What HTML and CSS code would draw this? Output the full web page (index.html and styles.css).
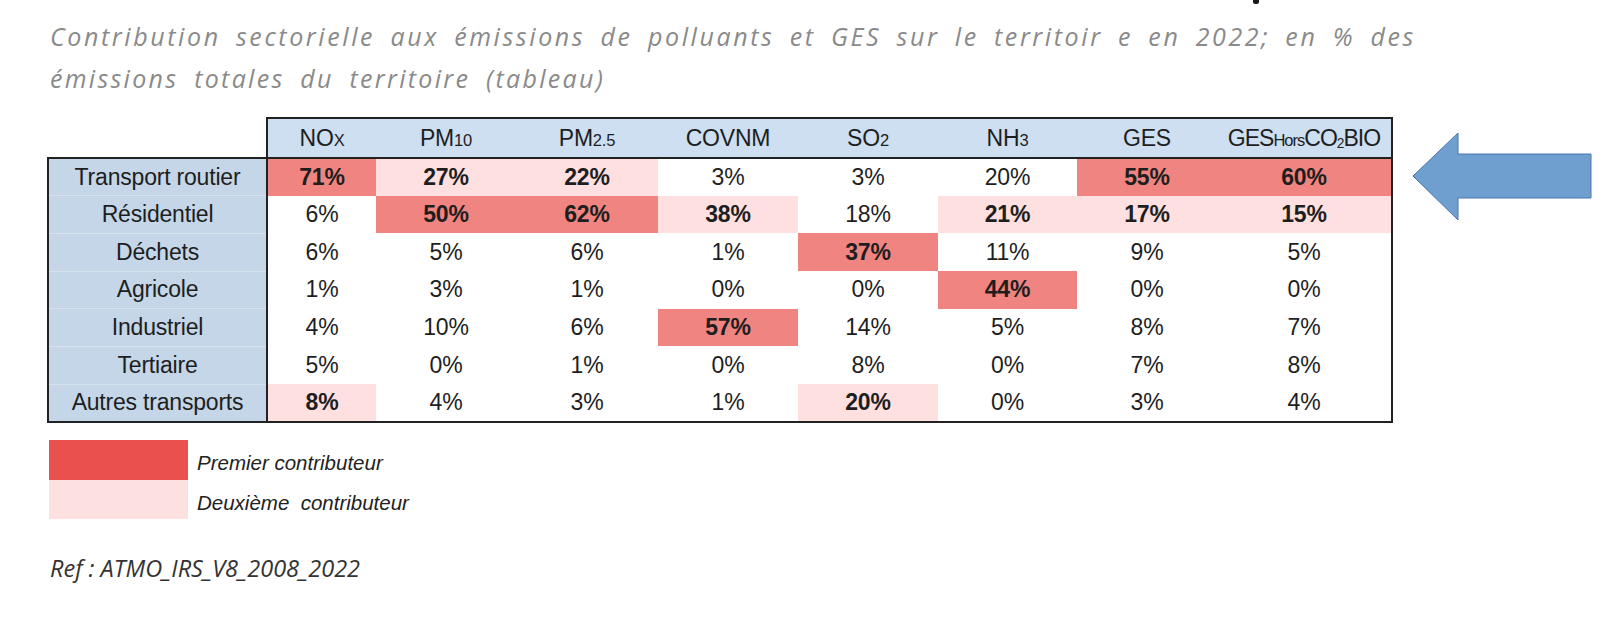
FILE: index.html
```html
<!DOCTYPE html>
<html lang="fr">
<head>
<meta charset="utf-8">
<title>Contribution sectorielle</title>
<link rel="stylesheet" href="styles.css">
</head>
<body>
<div class="page">
  <span class="mark"></span>
  <div class="title">
    <div class="line1">Contribution sectorielle aux émissions de polluants et GES sur le territoir e en 2022; en % des</div>
    <div class="line2">émissions totales du territoire (tableau)</div>
  </div>

  <div class="table-row">
    <table class="tbl">
      <colgroup>
        <col class="c-label"><col class="c-nox"><col class="c-std"><col class="c-pm25"><col class="c-std"><col class="c-std"><col class="c-nh3"><col class="c-std"><col class="c-last">
      </colgroup>
      <thead>
        <tr>
          <th class="corner"></th>
          <th>NO<span class="sm">X</span></th>
          <th>PM<span class="sm">10</span></th>
          <th>PM<span class="sm">2.5</span></th>
          <th>COVNM</th>
          <th>SO<span class="sm">2</span></th>
          <th>NH<span class="sm">3</span></th>
          <th>GES</th>
          <th class="ghc">GES<span class="sm">Hors</span>CO<sub class="sub">2</sub>BIO</th>
        </tr>
      </thead>
      <tbody>
        <tr><th>Transport routier</th><td class="p1">71%</td><td class="p2">27%</td><td class="p2">22%</td><td>3%</td><td>3%</td><td>20%</td><td class="p1">55%</td><td class="p1">60%</td></tr>
        <tr><th>Résidentiel</th><td>6%</td><td class="p1">50%</td><td class="p1">62%</td><td class="p2">38%</td><td>18%</td><td class="p2">21%</td><td class="p2">17%</td><td class="p2">15%</td></tr>
        <tr><th>Déchets</th><td>6%</td><td>5%</td><td>6%</td><td>1%</td><td class="p1">37%</td><td>11%</td><td>9%</td><td>5%</td></tr>
        <tr><th>Agricole</th><td>1%</td><td>3%</td><td>1%</td><td>0%</td><td>0%</td><td class="p1">44%</td><td>0%</td><td>0%</td></tr>
        <tr><th>Industriel</th><td>4%</td><td>10%</td><td>6%</td><td class="p1">57%</td><td>14%</td><td>5%</td><td>8%</td><td>7%</td></tr>
        <tr><th>Tertiaire</th><td>5%</td><td>0%</td><td>1%</td><td>0%</td><td>8%</td><td>0%</td><td>7%</td><td>8%</td></tr>
        <tr><th>Autres transports</th><td class="p2">8%</td><td>4%</td><td>3%</td><td>1%</td><td class="p2">20%</td><td>0%</td><td>3%</td><td>4%</td></tr>
      </tbody>
    </table>
    <svg class="arrow" width="181" height="90" viewBox="0 0 181 90" aria-hidden="true">
      <polygon points="1,44 46,1 46,22 179,22 179,66 46,66 46,88" fill="#6f9fcf" stroke="#4a76ae" stroke-width="1"/>
    </svg>
  </div>

  <div class="legend">
    <div class="leg-row"><span class="sw sw1"></span><span class="leg-text">Premier contributeur</span></div>
    <div class="leg-row"><span class="sw sw2"></span><span class="leg-text">Deuxième  contributeur</span></div>
  </div>

  <p class="ref">Ref : ATMO_IRS_V8_2008_2022</p>
</div>
</body>
</html>
```
FILE: styles.css
```css
html, body {
  margin: 0;
  padding: 0;
  background: #ffffff;
}

.page {
  position: relative;
  padding-top: 15px;
}

.mark {
  position: absolute;
  left: 1253px;
  top: 0;
  width: 6px;
  height: 4px;
  background: #1a1a1a;
  border-radius: 0 0 2px 2px;
}

.title {
  margin-left: 50px;
  width: 1366px;
  font-family: "Open Sans", "DejaVu Sans", sans-serif;
  font-style: italic;
  font-weight: 400;
  font-size: 25px;
  line-height: 42px;
  letter-spacing: 2.3px;
  word-spacing: 7px;
  color: #8a8a8a;
  white-space: nowrap;
}

.line1 {
  letter-spacing: 2.6px;
  word-spacing: 4px;
  white-space: normal;
  text-align: justify;
  text-align-last: justify;
}

.table-row {
  display: flex;
  align-items: flex-start;
  margin-top: 18px;
  margin-left: 47px;
}

.tbl {
  border-collapse: collapse;
  table-layout: fixed;
  width: 1345px;
  font-family: "Liberation Sans", Arial, sans-serif;
  font-size: 23px;
  letter-spacing: -0.2px;
  color: #1e1e1e;
}

.c-label { width: 219px; }
.c-nox { width: 109px; }
.c-std { width: 140px; }
.c-pm25 { width: 142px; }
.c-nh3 { width: 139px; }
.c-last { width: 175px; }

.tbl th,
.tbl td {
  padding: 0;
  text-align: center;
  font-weight: normal;
  white-space: nowrap;
}

.tbl thead th {
  height: 38px;
  background: #cddff1;
  border-top: 2px solid #222;
  border-bottom: 2px solid #222;
}

.tbl thead th.corner {
  background: none;
  border: none;
}

.tbl thead th:nth-child(2) {
  border-left: 2px solid #222;
}

.tbl thead th:last-child,
.tbl tbody td:last-child {
  border-right: 2px solid #222;
}

.tbl tbody tr {
  height: 37.7px;
}

.tbl tbody th {
  background: #c4d6e7;
  border-left: 2px solid #222;
  border-right: 2px solid #222;
  border-bottom: 1px solid #d6e2ee;
}

.tbl tbody tr:first-child th {
  border-top: 2px solid #222;
}

.tbl tbody tr:last-child > * {
  border-bottom: 2px solid #222;
}

.sm {
  font-size: 0.72em;
}

.ghc {
  letter-spacing: -1px;
}

.sub {
  font-size: 0.6em;
  vertical-align: -2px;
}

.tbl .p1 {
  background: #f08480;
  font-weight: bold;
}

.tbl .p2 {
  background: #fde0df;
  font-weight: bold;
}

.arrow {
  display: block;
  margin-left: 19px;
  margin-top: 15px;
  flex: none;
}

.legend {
  margin-top: 17px;
  margin-left: 49px;
}

.leg-row {
  display: flex;
  height: 40px;
}

.leg-row + .leg-row {
  height: 39px;
}

.sw {
  width: 139px;
  height: 100%;
}

.sw1 { background: #e8514d; }
.sw2 { background: #fde1e1; }

.leg-text {
  margin-left: 9px;
  padding-top: 9px;
  font-family: "Liberation Sans", Arial, sans-serif;
  font-style: italic;
  font-size: 20.5px;
  line-height: 28px;
  color: #222;
  white-space: pre;
}

.ref {
  margin: 34px 0 0 50px;
  font-family: "Open Sans", "DejaVu Sans", sans-serif;
  font-style: italic;
  font-size: 23.5px;
  line-height: 30px;
  color: #333;
}
```
